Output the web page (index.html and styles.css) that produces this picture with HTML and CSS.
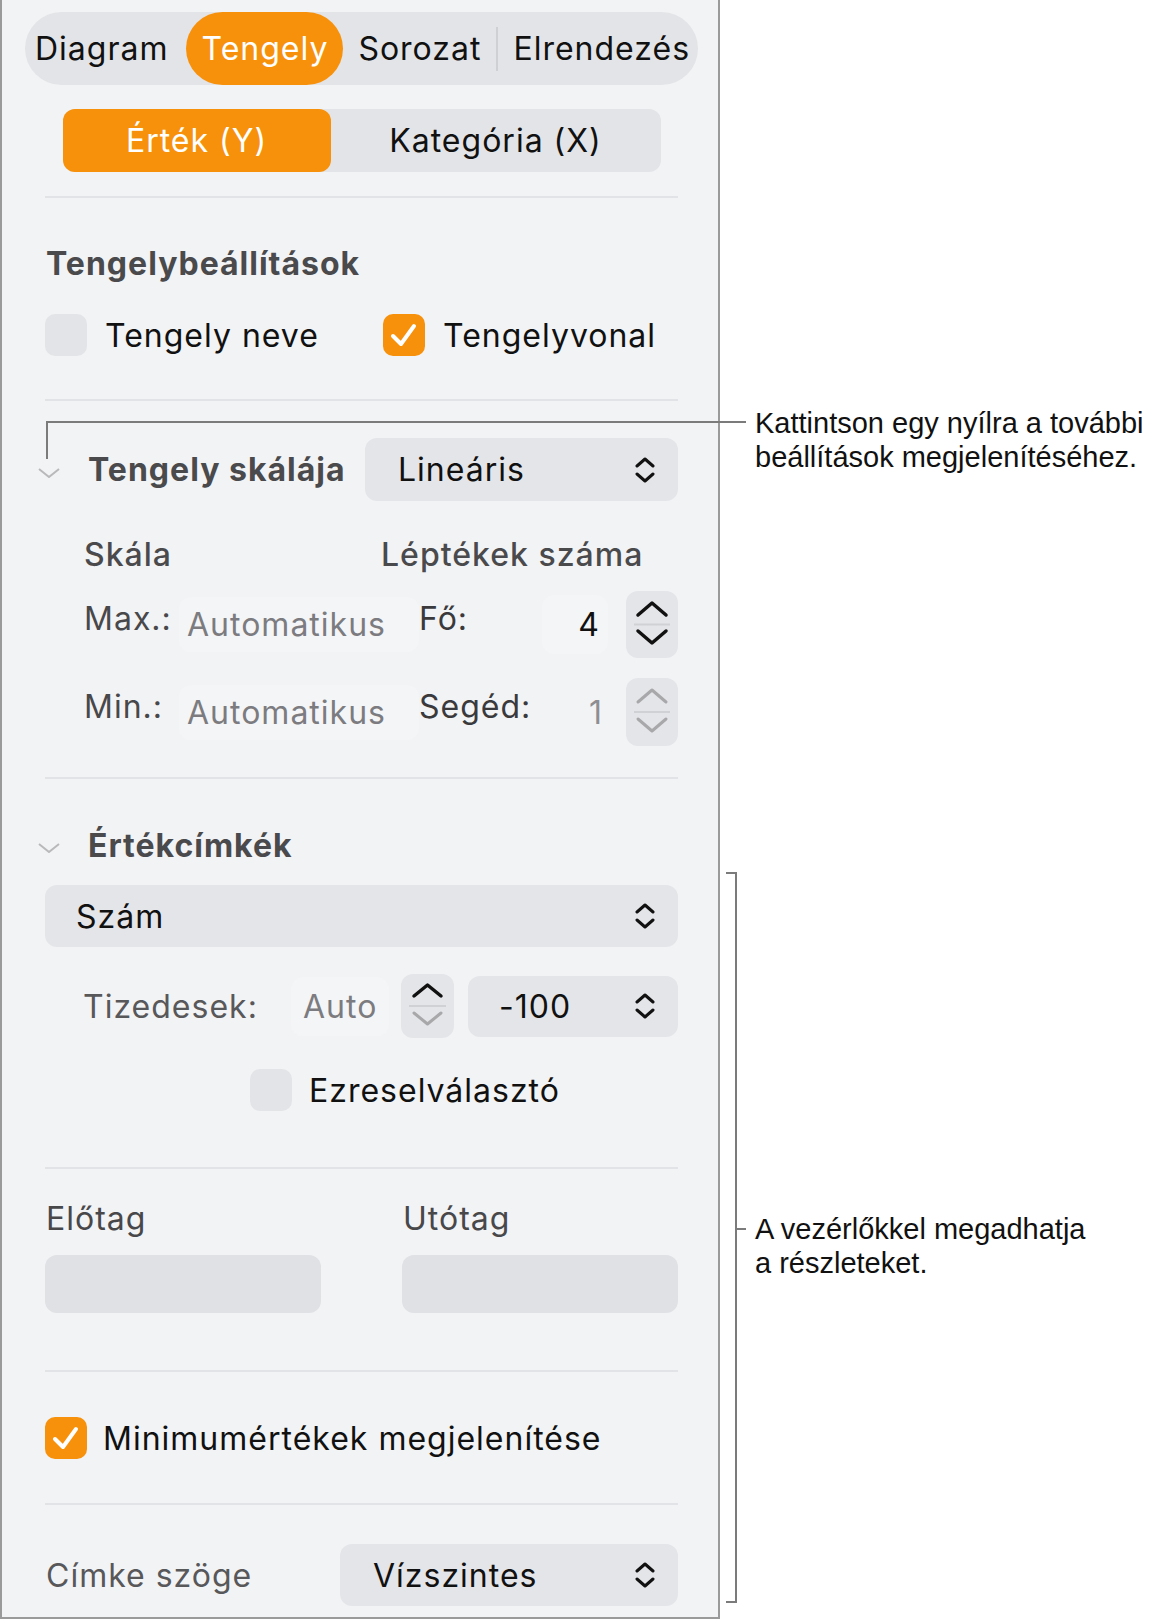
FILE: index.html
```html
<!DOCTYPE html>
<html lang="hu">

<head>
    <meta charset="UTF-8">
    <meta name="viewport" content="width=device-width, initial-scale=1.0">
    <title>Tengely beállítások</title>
    <link rel="stylesheet" href="styles.css">
</head>

<body>
    <div class="page">
        <div class="panel">
            <!-- felső fülek -->
            <div class="tabs">
                <div class="tab">Diagram</div>
                <div class="tab active">Tengely</div>
                <div class="tab">Sorozat</div>
                <div class="tab-sep"></div>
                <div class="tab">Elrendezés</div>
            </div>

            <div class="segmented">
                <div class="seg seg-y active">Érték (Y)</div>
                <div class="seg seg-x">Kategória (X)</div>
            </div>

            <div class="divider d1"></div>

            <!-- Tengelybeállítások -->
            <div class="title-row">Tengelybeállítások</div>
            <div class="check-row">
                <div class="check">
                    <span class="box"></span>
                    <span>Tengely neve</span>
                </div>
                <div class="check">
                    <span class="box on">
                        <svg width="42" height="42" viewBox="0 0 42 42"><polyline points="10,22 18,30 31,12" /></svg>
                    </span>
                    <span>Tengelyvonal</span>
                </div>
            </div>

            <div class="divider d2"></div>

            <!-- Tengely skálája -->
            <div class="section-head scale-head">
                <svg class="disclosure" width="22" height="10" viewBox="0 0 22 10"><polyline points="1,1 11,9 21,1" /></svg>
                <span class="head-text">Tengely skálája</span>
                <div class="select select-scale">
                    <span>Lineáris</span>
                    <svg class="updown" width="20" height="28" viewBox="0 0 20 28"><polyline points="2,10 10,3 18,10" /><polyline points="2,18 10,25 18,18" /></svg>
                </div>
            </div>

            <div class="sub-head">
                <span>Skála</span>
                <span>Léptékek száma</span>
            </div>

            <div class="scale-row row-max">
                <span class="lbl">Max.:</span>
                <span class="field auto">Automatikus</span>
                <div class="count">
                    <span class="lbl dark">Fő:</span>
                    <span class="field num">4</span>
                </div>
                <div class="stepper">
                    <svg width="52" height="67" viewBox="0 0 52 67">
                        <polyline class="on" points="12,24 26,12 40,24" />
                        <line x1="8" y1="33.5" x2="44" y2="33.5" />
                        <polyline class="on" points="12,40 26,52 40,40" />
                    </svg>
                </div>
            </div>

            <div class="scale-row row-min">
                <span class="lbl">Min.:</span>
                <span class="field auto">Automatikus</span>
                <div class="count">
                    <span class="lbl dark">Segéd:</span>
                    <span class="field num dim">1</span>
                </div>
                <div class="stepper">
                    <svg width="52" height="68" viewBox="0 0 52 68">
                        <polyline class="off" points="12,24 26,12 40,24" />
                        <line x1="8" y1="34" x2="44" y2="34" />
                        <polyline class="off" points="12,41 26,53 40,41" />
                    </svg>
                </div>
            </div>

            <div class="divider d3"></div>

            <!-- Értékcímkék -->
            <div class="section-head label-head">
                <svg class="disclosure" width="22" height="10" viewBox="0 0 22 10"><polyline points="1,1 11,9 21,1" /></svg>
                <span class="head-text">Értékcímkék</span>
            </div>

            <div class="select select-wide">
                <span>Szám</span>
                <svg class="updown" width="20" height="28" viewBox="0 0 20 28"><polyline points="2,10 10,3 18,10" /><polyline points="2,18 10,25 18,18" /></svg>
            </div>

            <div class="decimals">
                <span class="lbl">Tizedesek:</span>
                <span class="field auto">Auto</span>
                <div class="stepper small">
                    <svg width="53" height="64" viewBox="0 0 53 64">
                        <polyline class="on" points="13,22 26.5,11 40,22" />
                        <line x1="8" y1="32" x2="45" y2="32" />
                        <polyline class="off" points="13,39 26.5,50 40,39" />
                    </svg>
                </div>
                <div class="select select-neg">
                    <span>-100</span>
                    <svg class="updown" width="20" height="28" viewBox="0 0 20 28"><polyline points="2,10 10,3 18,10" /><polyline points="2,18 10,25 18,18" /></svg>
                </div>
            </div>

            <div class="check-row thousands">
                <div class="check">
                    <span class="box"></span>
                    <span>Ezreselválasztó</span>
                </div>
            </div>

            <div class="divider d4"></div>

            <div class="pair labels">
                <span>Előtag</span>
                <span>Utótag</span>
            </div>
            <div class="pair inputs">
                <div class="text-input"></div>
                <div class="text-input"></div>
            </div>

            <div class="divider d5"></div>

            <div class="check-row minimum">
                <div class="check">
                    <span class="box on">
                        <svg width="42" height="42" viewBox="0 0 42 42"><polyline points="10,22 18,30 31,12" /></svg>
                    </span>
                    <span>Minimumértékek megjelenítése</span>
                </div>
            </div>

            <div class="divider d6"></div>

            <div class="angle-row">
                <span class="lbl">Címke szöge</span>
                <div class="select select-angle">
                    <span>Vízszintes</span>
                    <svg class="updown" width="20" height="28" viewBox="0 0 20 28"><polyline points="2,10 10,3 18,10" /><polyline points="2,18 10,25 18,18" /></svg>
                </div>
            </div>
        </div>

        <!-- magyarázó feliratok -->
        <div class="callout-line arrow-h"></div>
        <div class="callout-line arrow-v"></div>
        <p class="callout note-top">Kattintson egy nyílra a további<br>beállítások megjelenítéséhez.</p>

        <div class="bracket"></div>
        <div class="callout-line bracket-tick"></div>
        <p class="callout note-bottom">A vezérlőkkel megadhatja<br>a részleteket.</p>
    </div>
</body>

</html>
```

FILE: styles.css
```css
/* alap */
body {
    margin: 0;
    background: #fff;
    font-family: "Inter", "Liberation Sans", sans-serif;
    color: #111;
}

.page {
    position: relative;
    width: 1162px;
    min-height: 1620px;
}

/* panel */
.panel {
    width: 720px;
    box-sizing: border-box;
    background: #f2f3f5;
    border: 2px solid #9a9a9a;
    border-top: none;
    padding: 12px 40px 11px 43px;
    font-size: 32px;
    letter-spacing: 1px;
}

/* fülek */
.tabs {
    display: flex;
    align-items: center;
    height: 73px;
    margin: 0 -20px;
    padding: 0 0 0 10px;
    background: #e3e4e7;
    border-radius: 37px;
    white-space: nowrap;
    overflow: hidden;
}

.tab {
    flex: none;
    height: 73px;
    line-height: 73px;
    padding: 0 15px;
    color: #111;
}

.tab:first-child {
    padding-left: 0;
    padding-right: 18px;
}

.tab:last-child {
    padding-right: 0;
}

.tab.active {
    background: #f7910b;
    color: #fff;
    border-radius: 37px;
}

.tab-sep {
    flex: none;
    width: 2px;
    height: 44px;
    background: #cfd0d3;
}

/* szegmentált vezérlő */
.segmented {
    display: flex;
    width: 598px;
    height: 63px;
    margin: 24px auto 0;
    background: #e3e4e7;
    border-radius: 12px;
}

.seg {
    display: flex;
    align-items: center;
    justify-content: center;
}

.seg-y {
    width: 268px;
}

.seg-x {
    flex: 1;
}

.seg.active {
    background: #f7910b;
    color: #fff;
    border-radius: 12px;
}

/* elválasztók */
.divider {
    height: 2px;
    background: #e2e3e6;
}

.d1 { margin-top: 24px; }
.d2 { margin-top: 43px; }
.d3 { margin-top: 31px; }
.d4 { margin-top: 57px; }
.d5 { margin-top: 57px; }
.d6 { margin-top: 45px; }

/* címsorok */
.title-row {
    margin-top: 46px;
    height: 40px;
    line-height: 40px;
    font-weight: 700;
    color: #4a4a4c;
    padding-left: 1px;
}

.section-head {
    display: flex;
    align-items: center;
    white-space: nowrap;
}

.scale-head {
    margin-top: 37px;
    height: 63px;
}

.label-head {
    margin-top: 46px;
    height: 40px;
}

.disclosure {
    margin-left: -7px;
    margin-right: 28px;
    margin-top: 6px;
}

.disclosure polyline {
    fill: none;
    stroke: #b9b9bb;
    stroke-width: 2;
}

.head-text {
    font-weight: 700;
    color: #4a4a4c;
}

/* jelölőnégyzetek */
.check-row {
    display: grid;
    grid-template-columns: 338px 1fr;
    margin-top: 30px;
    height: 42px;
}

.check {
    display: flex;
    align-items: center;
    gap: 18px;
    white-space: nowrap;
}

.box {
    width: 42px;
    height: 42px;
    flex: none;
    border-radius: 10px;
    background: #e3e4e7;
}

.box.on {
    background: #f7910b;
}

.box svg polyline {
    fill: none;
    stroke: #fff;
    stroke-width: 4;
    stroke-linecap: round;
    stroke-linejoin: round;
}

.thousands {
    margin-top: 31px;
    padding-left: 205px;
    grid-template-columns: 1fr;
    height: 41px;
}

.thousands .check {
    gap: 17px;
}

.minimum {
    margin-top: 45px;
    grid-template-columns: 1fr;
    height: 41px;
}

.minimum .check {
    gap: 16px;
}

/* legördülők */
.select {
    display: flex;
    align-items: center;
    justify-content: space-between;
    box-sizing: border-box;
    background: #e4e5e8;
    border-radius: 12px;
    padding: 0 23px 0 33px;
    color: #111;
}

.updown polyline {
    fill: none;
    stroke: #111;
    stroke-width: 3;
    stroke-linecap: round;
    stroke-linejoin: round;
}

.select-scale {
    margin-left: auto;
    width: 313px;
    height: 63px;
}

.select-wide {
    margin-top: 20px;
    height: 62px;
    padding-left: 31px;
}

.select-neg {
    width: 210px;
    height: 61px;
    margin-left: 14px;
    padding-left: 31px;
}

.select-angle {
    margin-left: auto;
    width: 338px;
    height: 62px;
}

/* skála */
.sub-head {
    display: grid;
    grid-template-columns: 297px 1fr;
    margin-top: 34px;
    height: 40px;
    line-height: 40px;
    padding-left: 39px;
    font-weight: 500;
    color: #4a4a4c;
    white-space: nowrap;
}

.scale-row {
    display: grid;
    grid-template-columns: 103px 232px 1fr 52px;
    align-items: center;
    padding-left: 39px;
    white-space: nowrap;
}

.row-max {
    margin-top: 16px;
    height: 67px;
}

.row-min {
    margin-top: 20px;
    height: 68px;
}

.lbl {
    color: #48484a;
    margin-bottom: 12px;
}

.lbl.dark {
    color: #3a3a3c;
}

.field {
    background: #f4f5f7;
    border-radius: 12px;
}

.field.auto {
    color: #7c7c80;
    margin-left: -8px;
    padding: 8px;
}

.count {
    display: flex;
    align-items: center;
    height: 100%;
}

.field.num {
    margin-left: auto;
    margin-right: 18px;
    width: 58px;
    padding: 10px 8px 10px 0;
    text-align: right;
    color: #111;
}

.field.num.dim {
    color: #8e8e92;
    margin-right: 15px;
    background: none;
}

.stepper {
    display: flex;
    background: #e4e5e8;
    border-radius: 12px;
}

.stepper line {
    stroke: #d0d1d4;
    stroke-width: 2;
}

.stepper polyline {
    fill: none;
    stroke-width: 3.5;
    stroke-linecap: round;
    stroke-linejoin: round;
}

.stepper .on {
    stroke: #111;
}

.stepper .off {
    stroke: #a8a8ab;
    stroke-width: 3;
}

/* tizedesek */
.decimals {
    display: flex;
    align-items: center;
    margin-top: 27px;
    height: 64px;
    padding-left: 38px;
    white-space: nowrap;
}

.decimals .lbl {
    width: 220px;
    margin-bottom: 0;
    color: #58585a;
}

.decimals .field.auto {
    width: 98px;
    box-sizing: border-box;
    margin-left: -12px;
    padding: 10px 12px;
    margin-right: 12px;
}

.stepper.small {
    align-self: flex-start;
}

/* előtag / utótag */
.pair {
    display: grid;
    grid-template-columns: 276px 276px;
    column-gap: 81px;
}

.labels {
    margin-top: 30px;
    height: 40px;
    line-height: 40px;
    color: #48484a;
    padding-left: 1px;
}

.inputs {
    margin-top: 16px;
    height: 58px;
}

.text-input {
    background: #e0e1e4;
    border-radius: 12px;
}

/* címke szöge */
.angle-row {
    display: flex;
    align-items: center;
    margin-top: 39px;
    height: 62px;
    white-space: nowrap;
}

.angle-row .lbl {
    margin-bottom: 0;
    padding-left: 1px;
    color: #58585a;
}

/* feliratok és vonalak */
.callout-line {
    position: absolute;
    background: #7b7b7b;
}

.arrow-h {
    left: 46px;
    top: 421px;
    width: 700px;
    height: 2px;
}

.arrow-v {
    left: 46px;
    top: 421px;
    width: 2px;
    height: 38px;
}

.bracket {
    position: absolute;
    left: 726px;
    top: 872px;
    width: 9px;
    height: 727px;
    border: 2px solid #7b7b7b;
    border-left: none;
}

.bracket-tick {
    left: 735px;
    top: 1228px;
    width: 11px;
    height: 2px;
}

.callout {
    position: absolute;
    left: 755px;
    margin: 0;
    font-family: "Liberation Sans", Arial, sans-serif;
    font-size: 29px;
    line-height: 34px;
    color: #111;
}

.note-top {
    top: 406px;
}

.note-bottom {
    top: 1212px;
}
```
